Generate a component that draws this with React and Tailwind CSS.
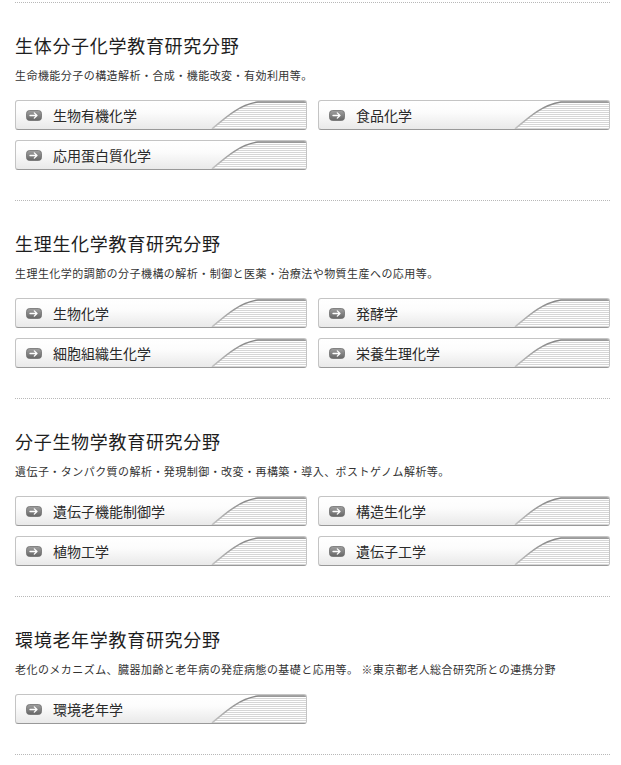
// Research field listing — sections with title, description and link buttons

const SECTIONS = [
  {
    title: '生体分子化学教育研究分野',
    desc:  '生命機能分子の構造解析・合成・機能改変・有効利用等。',
    items: ['生物有機化学', '食品化学', '応用蛋白質化学'],
  },
  {
    title: '生理生化学教育研究分野',
    desc:  '生理生化学的調節の分子機構の解析・制御と医薬・治療法や物質生産への応用等。',
    items: ['生物化学', '発酵学', '細胞組織生化学', '栄養生理化学'],
  },
  {
    title: '分子生物学教育研究分野',
    desc:  '遺伝子・タンパク質の解析・発現制御・改変・再構築・導入、ポストゲノム解析等。',
    items: ['遺伝子機能制御学', '構造生化学', '植物工学', '遺伝子工学'],
  },
  {
    title: '環境老年学教育研究分野',
    desc:  '老化のメカニズム、臓器加齢と老年病の発症病態の基礎と応用等。 ※東京都老人総合研究所との連携分野',
    items: ['環境老年学'],
  },
];

// Small grey rounded box with a white arrow
function ArrowIcon() {
  return (
    <svg width="16" height="11" viewBox="0 0 16 11" className="shrink-0">
      <defs>
        <linearGradient id="ai" x1="0" y1="0" x2="0" y2="1">
          <stop offset="0" stopColor="#a0a0a0" />
          <stop offset="1" stopColor="#666666" />
        </linearGradient>
      </defs>
      <rect x="0.5" y="0.5" width="15" height="10" rx="3" fill="url(#ai)" stroke="#707070" strokeWidth="0.8" />
      <path d="M4 5.5 H11 M8.3 2.9 L11 5.5 L8.3 8.1" fill="none" stroke="#fff" strokeWidth="1.3" strokeLinecap="round" strokeLinejoin="round" />
    </svg>
  );
}

// Decorative swoop + stripes on the right side of each button
function Swoop() {
  return (
    <svg width="100" height="28" viewBox="0 0 100 28" className="absolute right-0 top-0">
      <defs>
        <pattern id="stripes" width="4" height="2" patternUnits="userSpaceOnUse">
          <rect width="4" height="1" fill="#ffffff" />
          <rect y="1" width="4" height="1" fill="#d6d6d6" />
        </pattern>
        <linearGradient id="sw" x1="0" y1="0" x2="0" y2="1">
          <stop offset="0" stopColor="#858585" />
          <stop offset="1" stopColor="#c4c4c4" />
        </linearGradient>
      </defs>
      <path d="M6 28 C20 16 33 4 52 1 L100 1 L100 28 Z" fill="url(#stripes)" />
      <path d="M6 28 C20 16 33 4 52 1 L100 1" fill="none" stroke="url(#sw)" strokeWidth="1.5" />
    </svg>
  );
}

function FieldButton({ label }) {
  return (
    <a
      href="#"
      className="relative flex items-center h-[30px] rounded-[3px] border border-[#c4c4c4] border-b-[#999] bg-[linear-gradient(#ffffff,#fcfcfc_40%,#e9e9e9)] overflow-hidden pl-[10px]"
    >
      <Swoop />
      <ArrowIcon />
      <span className="relative ml-[11px] text-[14px] leading-none text-[#2a2a2a]">{label}</span>
    </a>
  );
}

export default function App() {
  return (
    <div className="bg-white min-h-[765px] pt-[2px] pl-[15px] pr-[11px] font-['Noto_Sans_CJK_JP','Noto_Sans',sans-serif]">
      {SECTIONS.map((section) => (
        <section key={section.title} className="border-t border-dotted border-[#b8b8b8] pt-[30px] pb-[30px]">
          <h2 className="text-[18px] leading-[24px] tracking-[0.7px] font-normal text-[#1e1e1e]">
            {section.title}
          </h2>
          <p className="mt-[10px] text-[11px] leading-[16px] tracking-[0.45px] text-[#333]">
            {section.desc}
          </p>
          <div className="mt-[17px] grid grid-cols-2 gap-x-[11px] gap-y-[10px]">
            {section.items.map((item) => (
              <FieldButton key={item} label={item} />
            ))}
          </div>
        </section>
      ))}
      <div className="border-t border-dotted border-[#b8b8b8]" />
    </div>
  );
}
